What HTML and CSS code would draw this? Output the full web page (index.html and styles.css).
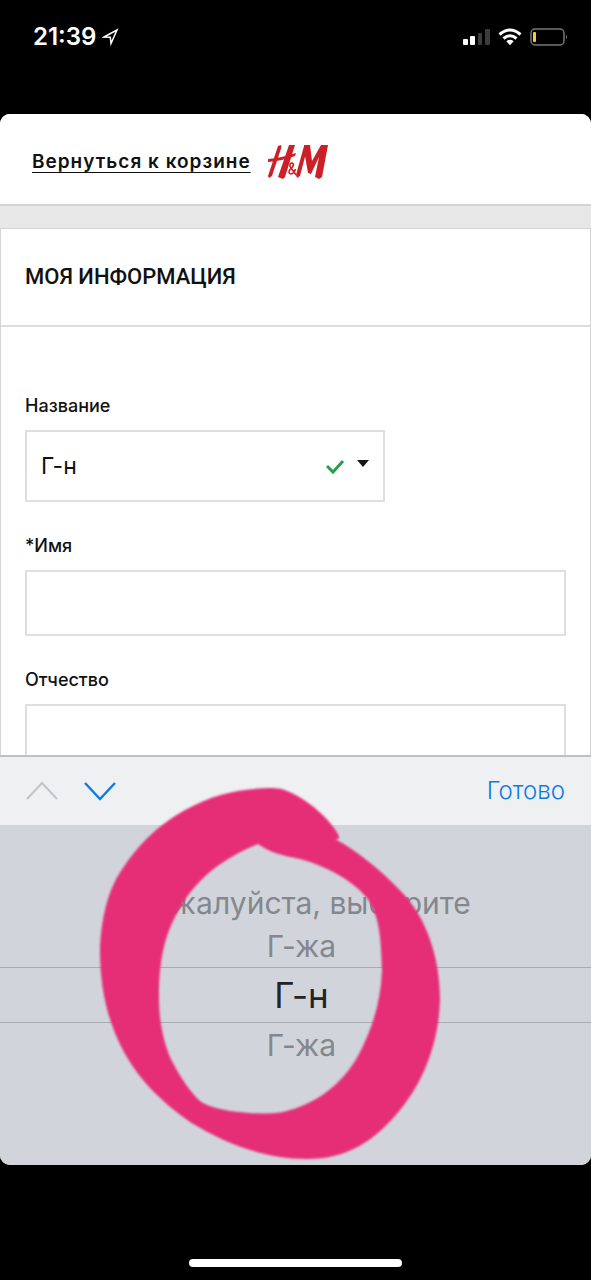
FILE: index.html
```
<!DOCTYPE html>
<html lang="ru">
<head>
<meta charset="utf-8">
<meta name="viewport" content="width=device-width, initial-scale=1">
<title>Моя информация</title>
<link rel="stylesheet" href="styles.css">
</head>
<body>
<div class="screen">
  <div class="status">
    <div class="status-group">
      <span class="clock">21:39</span>
      <svg class="location" viewBox="0 0 18 18" aria-hidden="true"><path d="M2 9 15 2 9 15.500 8.300 9.200Z" fill="none" stroke="#fff" stroke-width="1.500" stroke-linejoin="miter"/></svg>
    </div>
    <div class="status-group status-icons">
      <svg class="signal" viewBox="0 0 28 18" aria-hidden="true">
        <rect x="1" y="11" width="5" height="6" rx="1" fill="#fff"/><rect x="8" y="8" width="5" height="9" rx="1" fill="#fff"/><rect x="16" y="5" width="4" height="12" rx="1" fill="#3c3c3c"/><rect x="23" y="1" width="5" height="16" rx="1" fill="#3c3c3c"/>
      </svg>
      <svg class="wifi" viewBox="0 0 24 18" aria-hidden="true">
        <g fill="none" stroke="#fff" stroke-width="3"><path d="M1.500 6.500Q12-2.500 22.500 6.500"/><path d="M5.500 10.500Q12 5 18.500 10.500"/></g><path d="M8.300 13.200Q12 10.300 15.700 13.200L12 17.300Z" fill="#fff"/>
      </svg>
      <svg class="battery" viewBox="0 0 38 18" aria-hidden="true">
        <rect x="1" y="1" width="33" height="16" rx="4" fill="none" stroke="#777" stroke-width="1.500"/><rect x="3" y="4" width="3" height="10" rx="1" fill="#fccb2e"/><path d="M36 6.500Q38 9 36 11.500Z" fill="#777"/>
      </svg>
    </div>
  </div>

  <main class="app">
    <div class="page">
      <header class="header">
        <a class="back" href="#">Вернуться к корзине</a>
        <svg class="logo" viewBox="0 0 62 36" role="img" aria-label="H&amp;M">
          <g fill="#cc2029">
            <path d="M11 2 14 1 14.500 3 5 32 2 34 1 32Z"/>
            <path d="M22 1 28 1 18 33 16 35 11 33Z"/>
            <path d="M1 15Q14 14 29 9L28 12Q15 17 1 18Z"/>
            <path d="M37 2 40 1 40 5 33 32 30 34 29 31Z"/>
            <path d="M37 1 43 1 45 17 54 1 61 1 55 33 52 35 48 33 52 13 44 30 41 29 38 12Z"/>
          </g>
          <path d="M29 31 23 22.500Q22.500 19 25 19Q27.500 20 25.500 23L23 25.500Q20.500 29.500 24 30Q27.500 29 28.500 25" fill="none" stroke="#cc2029" stroke-width="1.600"/>
        </svg>
      </header>

      <form class="panel">
        <h1 class="panel-title">МОЯ ИНФОРМАЦИЯ</h1>
        <div class="fields">
          <div class="field">
            <label class="label" for="title">Название</label>
            <div class="select-box">
              <select class="control select" id="title">
                <option selected>Г-н</option>
                <option>Г-жа</option>
              </select>
              <svg class="select-marks" viewBox="0 0 44 18" aria-hidden="true"><path d="M1 9 7 15 17 4" fill="none" stroke="#2a9d50" stroke-width="3"/><path d="M31 3H43L37 10Z" fill="#161616"/></svg>
            </div>
          </div>
          <div class="field">
            <label class="label" for="first">*Имя</label>
            <input class="control" id="first" type="text">
          </div>
          <div class="field">
            <label class="label" for="middle">Отчество</label>
            <input class="control" id="middle" type="text">
          </div>
        </div>
      </form>
    </div>

    <section class="keyboard">
      <div class="toolbar">
        <div class="arrows">
          <button class="arrow" type="button" disabled aria-label="Предыдущее поле"><svg class="chevron" viewBox="0 0 34 20"><path d="M2 18 17 2 32 18" fill="none" stroke="#c3c4c7" stroke-width="2"/></svg></button>
          <button class="arrow" type="button" aria-label="Следующее поле"><svg class="chevron" viewBox="0 0 34 20"><path d="M2 2 17 18 32 2" fill="none" stroke="#0b7be8" stroke-width="2.400"/></svg></button>
        </div>
        <button class="done" type="button">Готово</button>
      </div>
      <div class="picker" role="listbox" aria-label="Название">
        <button class="option" type="button" role="option">Пожалуйста, выберите</button>
        <button class="option" type="button" role="option">Г-жа</button>
        <button class="option option-current" type="button" role="option" aria-selected="true">Г-н</button>
        <button class="option" type="button" role="option">Г-жа</button>
      </div>
      <svg class="marker" viewBox="96 784 348 380" aria-hidden="true">
        <defs><filter id="soft"><feGaussianBlur stdDeviation="0.9"/></filter></defs>
        <path filter="url(#soft)" fill="#e62e76" fill-rule="evenodd" d="M267 788C275 788 281 788 287 791C309 800 331 820 339 836Q340 840 335 839C358 851 388 876 407 898C428 923 440 960 440 1000C439 1040 425 1080 400 1110C375 1141 347 1159 307 1159C263 1159 222 1142 190 1122C160 1101 140 1080 125 1054C108 1023 100 990 100 950C101 917 109 887 123 868C143 838 165 821 187 809C210 796 236 789 267 788Z
        M258 844C270 853 285 856 300 859C325 866 350 878 367 898C380 916 381 940 382 970C381 1000 373 1028 358 1056C342 1084 317 1104 283 1112C270 1115 223 1114 203 1103C193 1097 178 1074 170 1057C162 1037 159 1018 159 997C159 950 168 926 186 898C206 870 230 856 258 844Z"/>
      </svg>
    </section>
  </main>

  <div class="home"><div class="home-bar"></div></div>
</div>
</body>
</html>
```
FILE: styles.css
```
* {
  box-sizing: border-box;
}

body {
  margin: 0;
  background: #000;
  color: #111;
  font-family: Inter, "Noto Sans", sans-serif;
}

button,
input,
select {
  margin: 0;
  font: inherit;
}

button {
  padding: 0;
  border: 0;
  background: none;
}

svg {
  display: block;
  flex: none;
}

.screen {
  display: flex;
  flex-direction: column;
  height: 100vh;
}

.status {
  display: flex;
  justify-content: space-between;
  padding: 21px 23px 61px 33px;
  color: #fff;
}

.status-group {
  display: flex;
  align-items: center;
  gap: 6px;
  height: 32px;
}

.status-icons {
  gap: 8px;
}

.clock {
  font-size: 24px;
  font-weight: 600;
  line-height: 32px;
}

.location {
  width: 18px;
  height: 18px;
}

.signal {
  width: 28px;
  height: 18px;
}

.wifi {
  width: 24px;
  height: 18px;
}

.battery {
  width: 38px;
  height: 18px;
}

.app {
  display: flex;
  flex: 1;
  flex-direction: column;
  min-height: 0;
  overflow: hidden;
  border-radius: 10px;
  background: #fff;
}

.page {
  flex: 1;
  min-height: 0;
  overflow: hidden;
  background: #e7e7e7;
}

.header {
  display: flex;
  align-items: center;
  gap: 16px;
  height: 92px;
  padding: 6px 32px 0;
  border-bottom: 2px solid #d4d4d4;
  background: #fff;
}

.back {
  color: #111;
  font-size: 19px;
  font-weight: 600;
  letter-spacing: 1px;
  line-height: 24px;
  text-decoration: underline;
  text-decoration-thickness: 1px;
  text-underline-offset: 4px;
}

.logo {
  width: 62px;
  height: 36px;
}

.panel {
  margin-top: 22px;
  border: 1px solid #d4d4d4;
  background: #fff;
}

.panel-title {
  margin: 0;
  padding: 32px 24px;
  border-bottom: 2px solid #dcdcdc;
  font-family: Roboto, sans-serif;
  font-size: 22px;
  font-weight: 500;
  line-height: 32px;
}

.fields {
  display: flex;
  flex-direction: column;
  gap: 32px;
  padding: 67px 24px 32px;
}

.field {
  display: flex;
  flex-direction: column;
  gap: 12px;
}

.label {
  font-size: 18px;
  font-weight: 500;
  line-height: 24px;
}

.control {
  width: 100%;
  height: 66px;
  padding: 0 16px;
  border: 2px solid #dfdfdf;
  border-radius: 0;
  outline: 0;
  background: #fff;
  color: #111;
  font-size: 24px;
}

.select-box {
  position: relative;
  width: 66.5%;
}

.select {
  display: block;
  height: 72px;
  padding: 0 14px;
  font-size: 23px;
  appearance: none;
}

.select-marks {
  position: absolute;
  top: 27px;
  right: 15px;
  width: 44px;
  height: 18px;
  pointer-events: none;
}

.keyboard {
  position: relative;
  background: #d1d5db;
}

.toolbar {
  display: flex;
  align-items: center;
  justify-content: space-between;
  height: 70px;
  padding: 0 26px 0 25px;
  border-top: 2px solid #bfc0c4;
  background: #eff0f2;
}

.arrows {
  display: flex;
  gap: 24px;
}

.chevron {
  width: 34px;
  height: 20px;
}

.done {
  color: #0b7be8;
  font-size: 24px;
  font-weight: 300;
  line-height: 32px;
}

.picker {
  display: flex;
  flex-direction: column;
  height: 340px;
  padding-top: 56px;
}

.option {
  height: 43px;
  color: #84888e;
  font-size: 30px;
  text-align: center;
  padding-left: 12px;
}

.option-current {
  height: 56px;
  border-top: 1px solid #a8abb1;
  border-bottom: 1px solid #a8abb1;
  color: #222428;
  font-size: 35px;
}

.marker {
  position: absolute;
  top: 29px;
  left: calc(50% - 200px);
  width: 348px;
  height: 380px;
  pointer-events: none;
}

.home {
  display: flex;
  align-items: flex-end;
  justify-content: center;
  height: 115px;
  padding-bottom: 13px;
}

.home-bar {
  width: 36%;
  height: 8px;
  border-radius: 4px;
  background: #fff;
}
```
